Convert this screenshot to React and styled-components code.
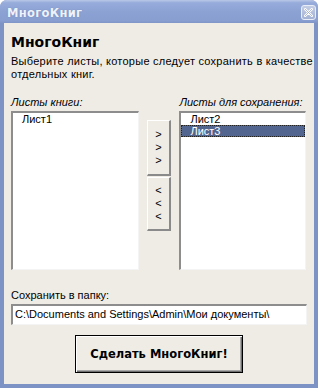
import React from "react";
import styled, { createGlobalStyle } from "styled-components";

const Global = createGlobalStyle`
  html, body { margin: 0; padding: 0; background: #ffffff; }
  body { font-family: "Liberation Sans", Arial, sans-serif; }
  * { box-sizing: border-box; }
`;

const Window = styled.div`
  width: 318px;
  height: 388px;
  display: flex;
  flex-direction: column;
  border-radius: 7px 7px 0 0;
  background: #7d93c6;
  overflow: hidden;
`;

const TitleBar = styled.div`
  height: 23px;
  flex: none;
  display: flex;
  align-items: center;
  justify-content: space-between;
  padding: 3px 2px 0 7px;
  background: linear-gradient(#b9c7e8 0%, #97acdb 12%, #8ca2d3 50%, #889ed0 90%, #7f95c8 100%);
`;

const Title = styled.span`
  color: #eef2fb;
  font-family: "DejaVu Sans", Verdana, sans-serif;
  font-weight: bold;
  font-size: 11.5px;
  letter-spacing: 0.3px;
  text-shadow: 0 0 1px rgba(70, 90, 140, 0.5);
`;

const CloseBtn = styled.div`
  width: 15px;
  height: 15px;
  margin-top: -2px;
  border-radius: 3px;
  border: 1px solid #e8edf8;
  background: linear-gradient(#c3cde4, #a3b2d5);
  display: flex;
  align-items: center;
  justify-content: center;
`;

const Body = styled.div`
  flex: 1;
  margin: 0 4px 4px 4px;
  background: #efece6;
  padding: 10px 8px 0 7px;
  display: flex;
  flex-direction: column;
  color: #000;
`;

const Heading = styled.div`
  font-family: "DejaVu Sans", Verdana, sans-serif;
  font-weight: bold;
  font-size: 14px;
  line-height: 18px;
`;

const Desc = styled.div`
  margin-top: 4px;
  font-size: 11px;
  line-height: 13px;
  letter-spacing: 0.25px;
  white-space: nowrap;
`;

const Columns = styled.div`
  margin-top: 15px;
  display: flex;
  align-items: flex-start;
`;

const Col = styled.div`
  display: flex;
  flex-direction: column;
  width: ${(p) => p.w}px;
`;

const Label = styled.div`
  font-size: 11px;
  line-height: 13px;
  font-style: italic;
  margin-bottom: 2px;
  white-space: nowrap;
`;

const ListBox = styled.div`
  height: 159px;
  background: #ffffff;
  border-top: 2px solid #8d8d8d;
  border-left: 2px solid #8d8d8d;
  border-right: 1px solid #f4f4f4;
  border-bottom: 1px solid #f4f4f4;
  display: flex;
  flex-direction: column;
`;

const Item = styled.div`
  height: 12px;
  font-size: 11px;
  line-height: 12px;
  padding-left: 9px;
  color: ${(p) => (p.selected ? "#ffffff" : "#000")};
  background: ${(p) => (p.selected ? "#52658f" : "transparent")};
  outline: ${(p) => (p.selected ? "1px dotted #222" : "none")};
  outline-offset: -1px;
`;

const Mover = styled.div`
  width: 41px;
  display: flex;
  flex-direction: column;
  align-items: center;
  padding-top: 24px;
  gap: 1px;
`;

const MoveBtn = styled.div`
  width: 24px;
  height: ${(p) => p.h}px;
  background: #efece6;
  border-top: 1px solid #ffffff;
  border-left: 1px solid #ffffff;
  border-right: 2px solid #8a8a8a;
  border-bottom: 2px solid #8a8a8a;
  display: flex;
  flex-direction: column;
  align-items: center;
  justify-content: center;
  font-size: 11px;
  line-height: 13px;
`;

const PathLabel = styled.div`
  margin-top: 19px;
  font-size: 11px;
  line-height: 13px;
`;

const PathInput = styled.div`
  margin-top: 2px;
  width: 296px;
  height: 21px;
  background: #ffffff;
  border-top: 2px solid #8d8d8d;
  border-left: 2px solid #8d8d8d;
  border-right: 1px solid #f4f4f4;
  border-bottom: 1px solid #f4f4f4;
  font-size: 11px;
  line-height: 17px;
  padding-left: 2px;
  white-space: nowrap;
  overflow: hidden;
`;

const Actions = styled.div`
  margin-top: 10px;
  display: flex;
  padding-left: 64px;
`;

const BigButton = styled.div`
  width: 168px;
  height: 38px;
  border: 1px solid #000;
  background: #efece6;
  box-shadow: inset 1px 1px 0 #ffffff, inset -1px -1px 0 #6f6f6f, inset -2px -2px 0 #a8a8a8;
  display: flex;
  align-items: center;
  justify-content: center;
  font-family: "DejaVu Sans", Verdana, sans-serif;
  font-weight: bold;
  font-size: 11.5px;
`;

export default function App() {
  return (
    <>
      <Global />
      <Window>
        <TitleBar>
          <Title>МногоКниг</Title>
          <CloseBtn>
            <svg width="9" height="9" viewBox="0 0 9 9">
              <path d="M1 1 L8 8 M8 1 L1 8" stroke="#ffffff" strokeWidth="2.4" strokeLinecap="round" />
              <path d="M1 1 L8 8 M8 1 L1 8" stroke="#9aa8c9" strokeWidth="0.8" strokeLinecap="round" />
            </svg>
          </CloseBtn>
        </TitleBar>
        <Body>
          <Heading>МногоКниг</Heading>
          <Desc>
            Выберите листы, которые следует сохранить в качестве
            <br />
            отдельных книг.
          </Desc>
          <Columns>
            <Col w={128}>
              <Label>Листы книги:</Label>
              <ListBox>
                <Item>Лист1</Item>
              </ListBox>
            </Col>
            <Mover>
              <MoveBtn h={56}>
                <span>&gt;</span>
                <span>&gt;</span>
                <span>&gt;</span>
              </MoveBtn>
              <MoveBtn h={54}>
                <span>&lt;</span>
                <span>&lt;</span>
                <span>&lt;</span>
              </MoveBtn>
            </Mover>
            <Col w={127}>
              <Label>Листы для сохранения:</Label>
              <ListBox>
                <Item>Лист2</Item>
                <Item selected>Лист3</Item>
              </ListBox>
            </Col>
          </Columns>
          <PathLabel>Сохранить в папку:</PathLabel>
          <PathInput>C:\Documents and Settings\Admin\Мои документы\</PathInput>
          <Actions>
            <BigButton>Сделать МногоКниг!</BigButton>
          </Actions>
        </Body>
      </Window>
    </>
  );
}
